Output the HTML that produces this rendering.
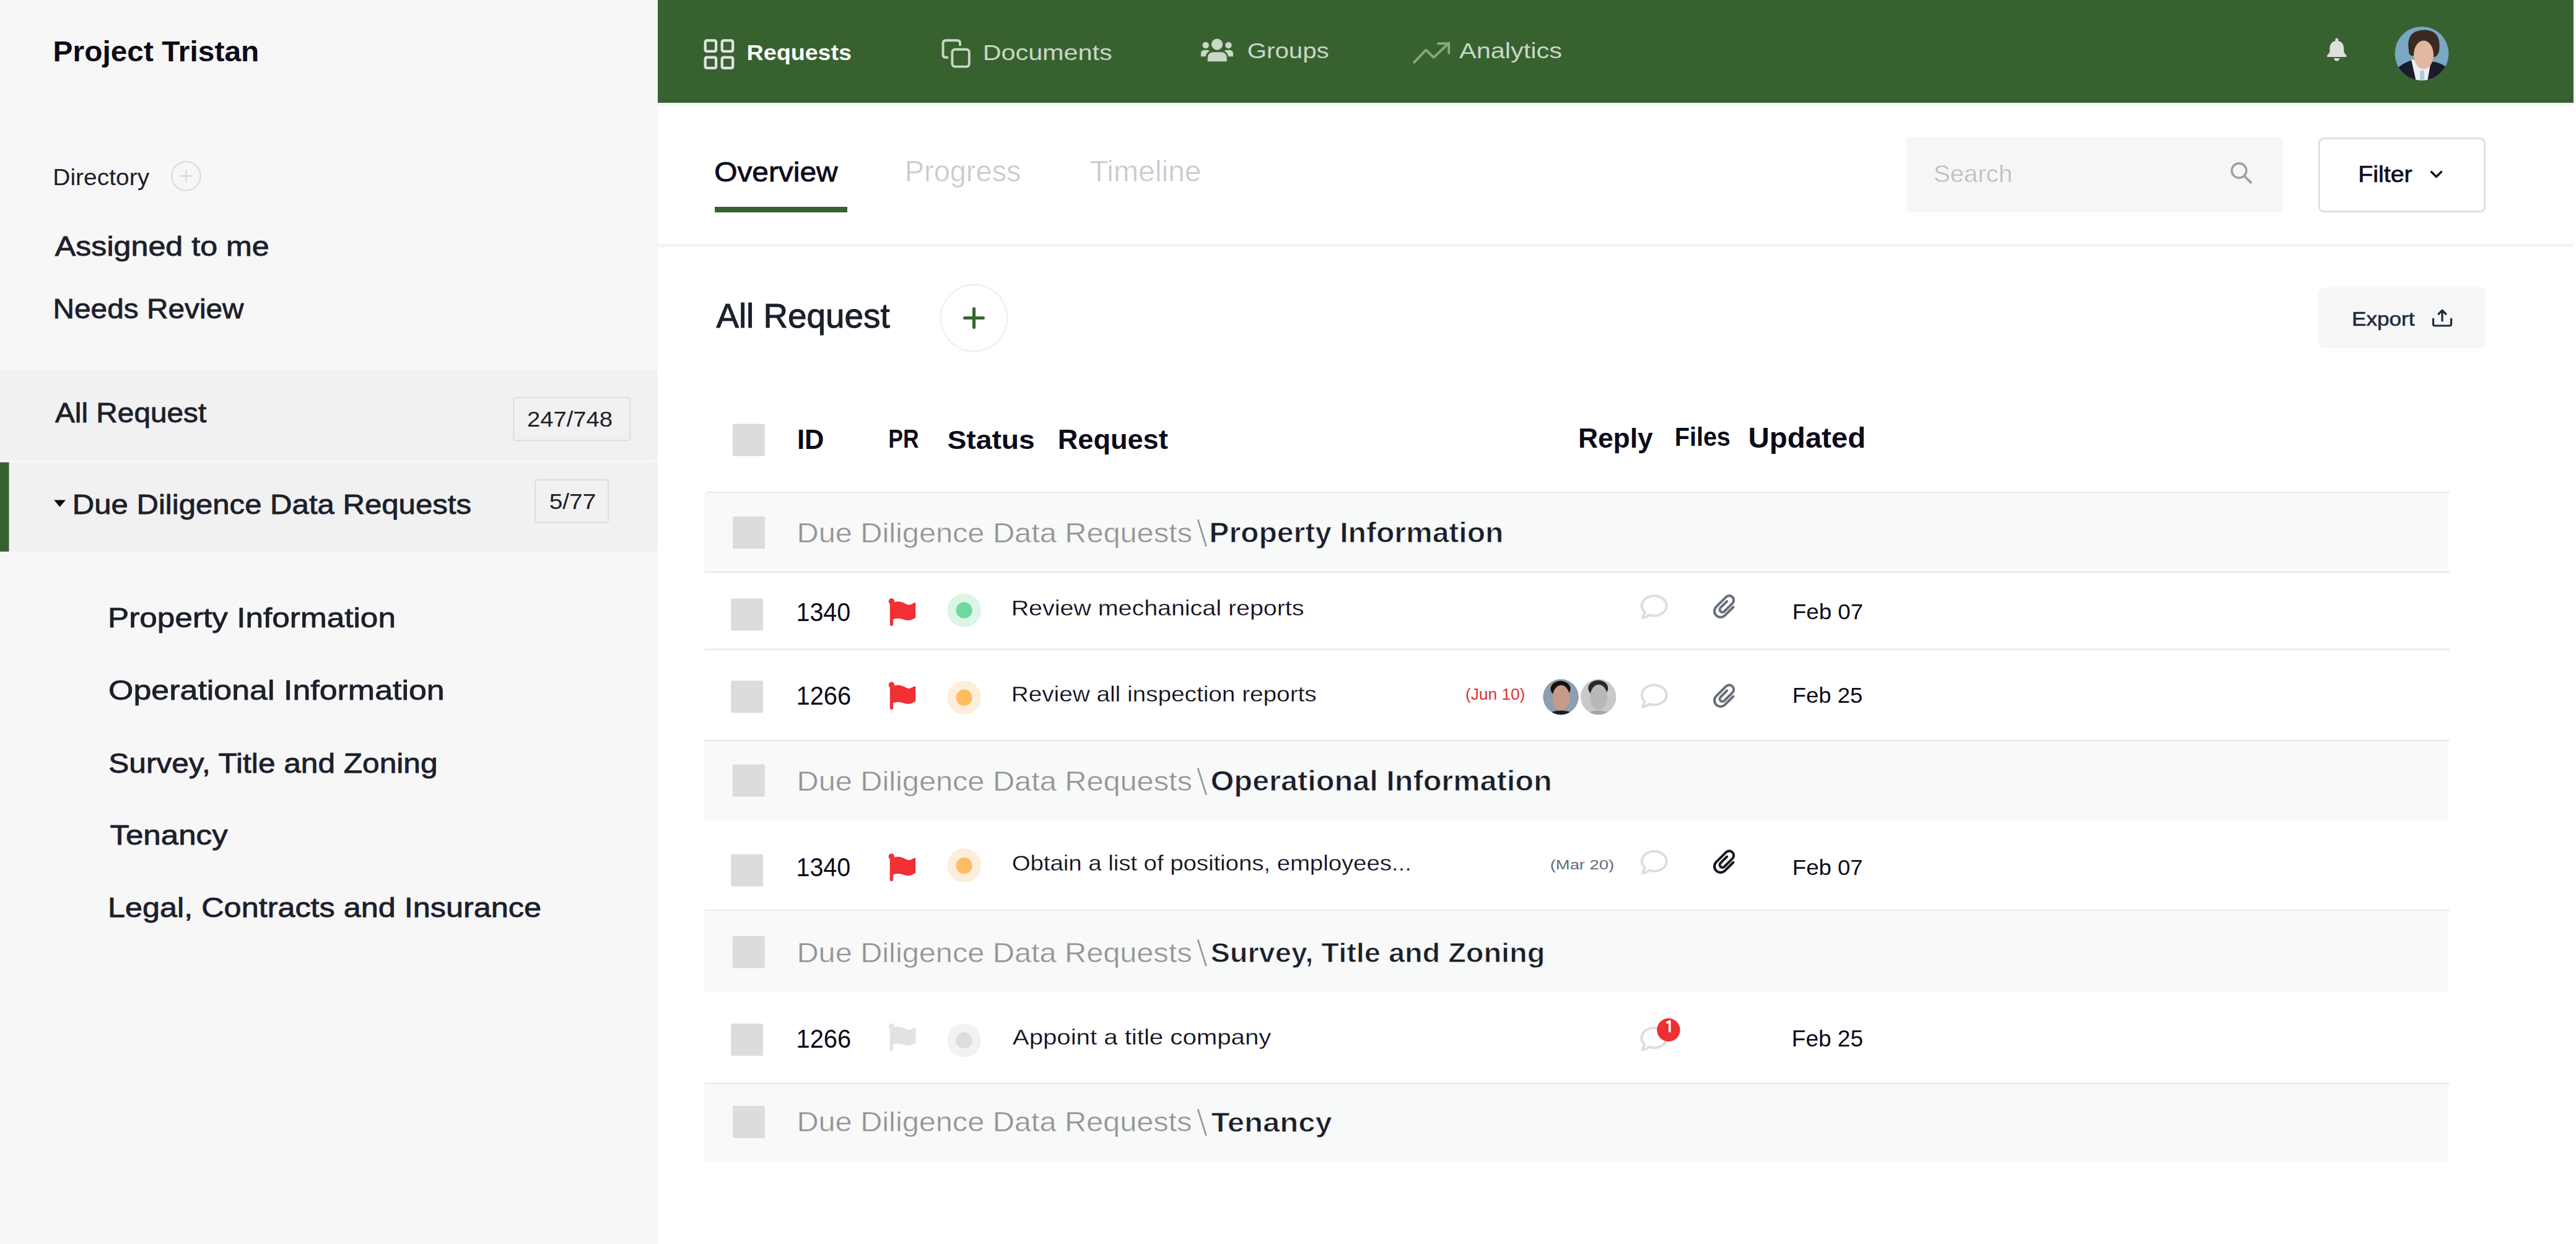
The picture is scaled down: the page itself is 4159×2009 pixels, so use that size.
<!DOCTYPE html>
<html><head><meta charset="utf-8"><title>Project Tristan</title>
<style>html,body{margin:0;padding:0;background:#fff;}body{width:4159px;height:2009px;overflow:hidden;position:relative;}
svg{position:absolute;left:0;top:0;} text{font-family:"Liberation Sans",sans-serif;}</style></head>
<body><svg width="4159" height="2009" viewBox="0 0 4159 2009">
<rect x="0" y="0" width="1062" height="2009" fill="#f7f7f7"/><path d="M0,0 H4 Q0,0 0,4 Z" fill="#fff"/>
<rect x="-10" y="596.6" width="1072" height="147" rx="6" fill="#f1f1f1"/>
<rect x="-10" y="746.6" width="1072" height="144.2" rx="6" fill="#f1f1f1"/>
<rect x="0" y="746.6" width="14.5" height="144.2" fill="#386130"/>
<rect x="1062" y="0" width="3093" height="166" fill="#386130"/>
<defs><linearGradient id="sh" x1="0" y1="0" x2="0" y2="1"><stop offset="0" stop-color="#ffffff"/><stop offset="0.2" stop-color="#f3f3f3"/><stop offset="1" stop-color="#fafafa"/></linearGradient></defs>
<rect x="1062" y="166" width="3093" height="6" fill="url(#sh)"/>
<rect x="1062" y="394" width="3093" height="5" fill="#f4f4f4"/>
<rect x="3078.4" y="221.5" width="606.6" height="121.5" rx="5" fill="#f6f6f6"/>
<rect x="3744.2" y="223.6" width="267.6" height="118.2" rx="8" fill="#fff" stroke="#dcdcdc" stroke-width="2.5"/>
<rect x="3742.7" y="464" width="271" height="98.4" rx="9" fill="#f6f6f7"/>
<rect x="1154" y="334" width="214" height="9" fill="#386130"/>
<circle cx="1572.5" cy="513.5" r="53.8" fill="#fff" stroke="#ececf9" stroke-width="2"/>
<path d="M1557.6,513.5H1587.4M1572.5,498.6V528.4" stroke="#386630" stroke-width="5.2" stroke-linecap="round"/>
<rect x="1141" y="794" width="2813.6" height="2" fill="#e6e6e6"/>
<rect x="1137" y="796" width="2816" height="127.0" fill="#f8f9f9"/>
<rect x="1137" y="1197" width="2816" height="128.0" fill="#f8f9f9"/>
<rect x="1137" y="1473.6" width="2816" height="127.7" fill="#f8f9f9"/>
<rect x="1137" y="1750.6" width="2816" height="125.4" fill="#f8f9f9"/>
<rect x="1138" y="923" width="2816.6" height="2" fill="#e6e6e6"/>
<rect x="1138" y="1047.5" width="2816.6" height="2" fill="#e6e6e6"/>
<rect x="1138" y="1195" width="2816.6" height="2" fill="#e6e6e6"/>
<rect x="1138" y="1469.2" width="2816.6" height="2" fill="#e6e6e6"/>
<rect x="1138" y="1748.5" width="2816.6" height="2" fill="#e6e6e6"/>
<rect x="1182.8" y="684.4" width="52" height="52" rx="2.5" fill="#dcdcdc"/>
<rect x="1183" y="834" width="52" height="52" rx="2.5" fill="#dcdcdc"/>
<rect x="1180" y="966.6" width="52" height="52" rx="2.5" fill="#dcdcdc"/>
<rect x="1180" y="1099.3" width="52" height="52" rx="2.5" fill="#dcdcdc"/>
<rect x="1182.7" y="1234.5" width="52" height="52" rx="2.5" fill="#dcdcdc"/>
<rect x="1180" y="1379.5" width="52" height="52" rx="2.5" fill="#dcdcdc"/>
<rect x="1182.7" y="1511.6" width="52" height="52" rx="2.5" fill="#dcdcdc"/>
<rect x="1180" y="1653" width="52" height="52" rx="2.5" fill="#dcdcdc"/>
<rect x="1183" y="1786" width="52" height="52" rx="2.5" fill="#dcdcdc"/>
<g transform="translate(0.00,0.00)" fill="#f03034"><circle cx="1439.4" cy="971" r="4.7"/><rect x="1436.8" y="971" width="5.2" height="39.8" rx="2.6"/><path d="M1441,973.2 C1451,969.5 1457,972.5 1464,976 C1470,979 1474,972.5 1478.3,973.2 V997.5 C1474,999.5 1470,1003 1463,1001.5 C1456,1000 1450,996.5 1441,1000.8 Z"/></g>
<g transform="translate(0.00,135.00)" fill="#f03034"><circle cx="1439.4" cy="971" r="4.7"/><rect x="1436.8" y="971" width="5.2" height="39.8" rx="2.6"/><path d="M1441,973.2 C1451,969.5 1457,972.5 1464,976 C1470,979 1474,972.5 1478.3,973.2 V997.5 C1474,999.5 1470,1003 1463,1001.5 C1456,1000 1450,996.5 1441,1000.8 Z"/></g>
<g transform="translate(-0.10,412.30)" fill="#f03034"><circle cx="1439.4" cy="971" r="4.7"/><rect x="1436.8" y="971" width="5.2" height="39.8" rx="2.6"/><path d="M1441,973.2 C1451,969.5 1457,972.5 1464,976 C1470,979 1474,972.5 1478.3,973.2 V997.5 C1474,999.5 1470,1003 1463,1001.5 C1456,1000 1450,996.5 1441,1000.8 Z"/></g>
<g transform="translate(0.00,686.50)" fill="#e2e2e2"><circle cx="1439.4" cy="971" r="4.7"/><rect x="1436.8" y="971" width="5.2" height="39.8" rx="2.6"/><path d="M1441,973.2 C1451,969.5 1457,972.5 1464,976 C1470,979 1474,972.5 1478.3,973.2 V997.5 C1474,999.5 1470,1003 1463,1001.5 C1456,1000 1450,996.5 1441,1000.8 Z"/></g>
<circle cx="1556.6" cy="985.5" r="27.3" fill="#dcf5e7"/><circle cx="1556.6" cy="985.5" r="13.1" fill="#6fd99c"/>
<circle cx="1556.6" cy="1126.7" r="27.3" fill="#fdeedb"/><circle cx="1556.6" cy="1126.7" r="13.1" fill="#fdbd60"/>
<circle cx="1556.6" cy="1397.9" r="27.3" fill="#fdeedb"/><circle cx="1556.6" cy="1397.9" r="13.1" fill="#fdbd60"/>
<circle cx="1556.6" cy="1680.2" r="27.3" fill="#f2f2f2"/><circle cx="1556.6" cy="1680.2" r="13.1" fill="#dddddd"/>
<path transform="translate(2671.1,978.7)" d="M-8.6,14.2 A20,16 0 1,0 -15.5,10.1 L-19.5,18.8 Q-14,18.8 -8.6,14.2 Z" fill="none" stroke="#dddddd" stroke-width="4" stroke-linejoin="round"/>
<path transform="translate(2671.1,1122.8)" d="M-8.6,14.2 A20,16 0 1,0 -15.5,10.1 L-19.5,18.8 Q-14,18.8 -8.6,14.2 Z" fill="none" stroke="#dddddd" stroke-width="4" stroke-linejoin="round"/>
<path transform="translate(2671.1,1391.2)" d="M-8.6,14.2 A20,16 0 1,0 -15.5,10.1 L-19.5,18.8 Q-14,18.8 -8.6,14.2 Z" fill="none" stroke="#dddddd" stroke-width="4" stroke-linejoin="round"/>
<path transform="translate(2670.8,1676.5)" d="M-8.6,14.2 A20,16 0 1,0 -15.5,10.1 L-19.5,18.8 Q-14,18.8 -8.6,14.2 Z" fill="none" stroke="#dddddd" stroke-width="4" stroke-linejoin="round"/>
<circle cx="2693.9" cy="1663.3" r="18.7" fill="#ee3034"/><path d="M2690.2,1652 L2695.8,1649.3 V1667" fill="none" stroke="#fff" stroke-width="3.6" stroke-linejoin="round"/>
<path transform="translate(0,0) matrix(0.7071,-0.7071,0.7071,0.7071,2770.9,979.9)" d="M18.5,6 L3.8,6 A4.25,4.25 0 0 0 3.8,14.5 L22.4,14.5 A7.25,7.25 0 0 0 22.4,0 L0,0 A9.9,9.9 0 0 0 0,19.8 L19,19.8" fill="none" stroke="#666e7a" stroke-width="4" stroke-linecap="round" stroke-linejoin="round"/>
<path transform="translate(0,144.3) matrix(0.7071,-0.7071,0.7071,0.7071,2770.9,979.9)" d="M18.5,6 L3.8,6 A4.25,4.25 0 0 0 3.8,14.5 L22.4,14.5 A7.25,7.25 0 0 0 22.4,0 L0,0 A9.9,9.9 0 0 0 0,19.8 L19,19.8" fill="none" stroke="#666e7a" stroke-width="4" stroke-linecap="round" stroke-linejoin="round"/>
<path transform="translate(0,412.3) matrix(0.7071,-0.7071,0.7071,0.7071,2770.9,979.9)" d="M18.5,6 L3.8,6 A4.25,4.25 0 0 0 3.8,14.5 L22.4,14.5 A7.25,7.25 0 0 0 22.4,0 L0,0 A9.9,9.9 0 0 0 0,19.8 L19,19.8" fill="none" stroke="#15141f" stroke-width="4" stroke-linecap="round" stroke-linejoin="round"/>
<clipPath id="c2520"><circle cx="2520" cy="1125.5" r="28.7"/></clipPath><g clip-path="url(#c2520)"><rect x="2490" y="1095.5" width="60" height="60" fill="#8b9fb0"/><ellipse cx="2519.5" cy="1112.5" rx="16" ry="13" fill="#17120f"/><ellipse cx="2520.5" cy="1127.0" rx="14" ry="20.5" fill="#c89a88"/><ellipse cx="2520" cy="1160.5" rx="26" ry="13" fill="#1e1c22"/></g>
<clipPath id="c2580"><circle cx="2580.7" cy="1125.5" r="28.7"/></clipPath><g clip-path="url(#c2580)"><rect x="2550.7" y="1095.5" width="60" height="60" fill="#c9c9cb"/><ellipse cx="2580.2" cy="1111.5" rx="16" ry="13" fill="#2c2627"/><ellipse cx="2581.2" cy="1126.0" rx="14" ry="20.5" fill="#b8b8ba"/><ellipse cx="2580.7" cy="1160.5" rx="26" ry="13" fill="#a5a5a8"/></g>
<rect x="1138.65" y="65.45" width="17.4" height="17.4" rx="2.5" fill="none" stroke="#e2e2e2" stroke-width="4.3"/>
<rect x="1165.75" y="65.45" width="17.4" height="17.4" rx="2.5" fill="none" stroke="#e2e2e2" stroke-width="4.3"/>
<rect x="1138.65" y="92.55" width="17.4" height="17.4" rx="2.5" fill="none" stroke="#e2e2e2" stroke-width="4.3"/>
<rect x="1165.75" y="92.55" width="17.4" height="17.4" rx="2.5" fill="none" stroke="#e2e2e2" stroke-width="4.3"/>
<path d="M1529.5,92.7 H1527 Q1522.5,92.7 1522.5,88.2 V69.8 Q1522.5,65.3 1527,65.3 H1545.5 Q1550,65.3 1550,69.8 V72.6" fill="none" stroke="#c9d7c6" stroke-width="3.9" stroke-linecap="round"/>
<rect x="1537.4" y="79.7" width="27.4" height="27.9" rx="4.5" fill="none" stroke="#c9d7c6" stroke-width="3.9"/>
<g fill="#c9d7c6"><circle cx="1965" cy="71.6" r="9.1"/><circle cx="1946.6" cy="73" r="5.3"/><circle cx="1983.4" cy="73" r="5.3"/><path d="M1949.7,99.3 V94 Q1949.7,84.3 1959.5,84.3 H1971 Q1980.7,84.3 1980.7,94 V99.3 Z"/><path d="M1938.8,91.2 V87 Q1938.8,80.7 1945,80.7 H1949 Q1951.5,80.7 1953,82.2 Q1947.5,85.5 1946.5,91.2 Z"/><path d="M1991,91.2 V87 Q1991,80.7 1984.8,80.7 H1980.8 Q1978.3,80.7 1976.8,82.2 Q1982.3,85.5 1983.3,91.2 Z"/></g>
<path d="M2283.3,100.6 L2302.2,80.7 L2314.7,92.8 L2339.2,69.5 M2322,70.3 H2339.2 V85.8" fill="none" stroke="#87a783" stroke-width="3.9" stroke-linecap="round" stroke-linejoin="round"/>
<path fill="#dedede" d="M3772.8,61.5 C3774.2,61.5 3775.2,62.6 3775.2,64 V66 C3781.5,67.3 3784.2,72.5 3784.2,78.5 V82.5 C3784.2,85 3786,87 3788.2,89.2 C3789.2,90.3 3788.7,92 3787.2,92 H3758.4 C3756.9,92 3756.4,90.3 3757.4,89.2 C3759.6,87 3761.4,85 3761.4,82.5 V78.5 C3761.4,72.5 3764.1,67.3 3770.4,66 V64 C3770.4,62.6 3771.4,61.5 3772.8,61.5 Z M3768.2,94 H3777.4 C3777.4,96.8 3775.3,98.6 3772.8,98.6 C3770.3,98.6 3768.2,96.8 3768.2,94 Z"/>
<clipPath id="av"><circle cx="3910" cy="86.5" r="43.5"/></clipPath><g clip-path="url(#av)"><rect x="3860" y="40" width="100" height="100" fill="#78a8c4"/><path d="M3862,118 Q3878,101 3895,97 L3911,131 L3925,99 Q3945,101 3958,116 V135 H3862 Z" fill="#1b1c2a"/><path d="M3893,96 L3925,98 L3919,132 L3901,132 Z" fill="#eceef0"/><rect x="3907" y="114" width="7" height="18" fill="#a9cde0"/><path d="M3889,82 Q3885,58 3900,51 Q3916,45 3929,52 Q3941,60 3938,82 Q3936,90 3931,92 L3893,90 Q3889,88 3889,82 Z" fill="#3b2a20"/><ellipse cx="3913" cy="88.5" rx="16" ry="23" fill="#e1b79f"/></g>
<circle cx="3615" cy="275.5" r="11.8" fill="none" stroke="#98a1a9" stroke-width="3.5"/><path d="M3623.8,284.5 L3634,294.8" stroke="#98a1a9" stroke-width="3.8" stroke-linecap="round"/>
<path d="M3925.5,277.5 L3933.5,285.5 L3941.5,277.5" fill="none" stroke="#0c0b19" stroke-width="3.2" stroke-linecap="round" stroke-linejoin="round"/>
<path d="M3943,518 V501.5 M3937.2,507 L3943,501.2 L3948.8,507 M3928.5,515 V523.5 Q3928.5,526 3931,526 H3955 Q3957.5,526 3957.5,523.5 V515" fill="none" stroke="#1e2b3b" stroke-width="3.2" stroke-linecap="round" stroke-linejoin="round"/>
<circle cx="300.4" cy="284.2" r="23.3" fill="none" stroke="#d9d9d9" stroke-width="2"/><path d="M290.2,284.2 H310.7 M300.4,274.6 V294.4" stroke="#d5d5d5" stroke-width="2"/>
<path d="M87.2,807.6 H106 L96.6,818.8 Z" fill="#0c0b19"/>
<rect x="829.4" y="641.8" width="187.9" height="69.4" rx="4" fill="none" stroke="#dcdcdc" stroke-width="2"/>
<rect x="864.3" y="774.7" width="117.9" height="69" rx="4" fill="none" stroke="#dcdcdc" stroke-width="2"/>
<path d="M1934,839.0 L1947.5,882.4" stroke="#939393" stroke-width="2.6"/>
<path d="M1934,1240.3 L1947.5,1283.7" stroke="#939393" stroke-width="2.6"/>
<path d="M1934,1517.4 L1947.5,1560.4" stroke="#939393" stroke-width="2.6"/>
<path d="M1934,1791.3 L1947.5,1834.1" stroke="#939393" stroke-width="2.6"/>
<text x="85.59" y="98.80" font-size="46.22" fill="#0c0b19" textLength="332.72" lengthAdjust="spacingAndGlyphs" font-weight="bold">Project Tristan</text>
<text x="85.31" y="299.20" font-size="37.79" fill="#1c202b" textLength="155.88" lengthAdjust="spacingAndGlyphs">Directory</text>
<text x="88.80" y="413.30" font-size="43.60" fill="#1c202b" textLength="345.92" lengthAdjust="spacingAndGlyphs" stroke="#1c202b" stroke-width="0.81">Assigned to me</text>
<text x="85.51" y="514.10" font-size="43.60" fill="#1c202b" textLength="308.10" lengthAdjust="spacingAndGlyphs" stroke="#1c202b" stroke-width="0.81">Needs Review</text>
<text x="88.91" y="682.19" font-size="43.88" fill="#1c202b" textLength="244.39" lengthAdjust="spacingAndGlyphs" stroke="#1c202b" stroke-width="0.81">All Request</text>
<text x="850.90" y="689.00" font-size="34.88" fill="#1c202b" textLength="138.13" lengthAdjust="spacingAndGlyphs">247/748</text>
<text x="116.71" y="830.09" font-size="44.59" fill="#1c202b" textLength="644.30" lengthAdjust="spacingAndGlyphs" stroke="#1c202b" stroke-width="0.82">Due Diligence Data Requests</text>
<text x="886.69" y="822.00" font-size="34.88" fill="#1c202b" textLength="75.57" lengthAdjust="spacingAndGlyphs">5/77</text>
<text x="174.01" y="1012.98" font-size="45.15" fill="#1c202b" textLength="464.97" lengthAdjust="spacingAndGlyphs" stroke="#1c202b" stroke-width="0.83">Property Information</text>
<text x="175.07" y="1129.59" font-size="44.45" fill="#1c202b" textLength="542.69" lengthAdjust="spacingAndGlyphs" stroke="#1c202b" stroke-width="0.82">Operational Information</text>
<text x="175.22" y="1247.98" font-size="45.15" fill="#1c202b" textLength="531.27" lengthAdjust="spacingAndGlyphs" stroke="#1c202b" stroke-width="0.83">Survey, Title and Zoning</text>
<text x="177.40" y="1364.10" font-size="43.74" fill="#1c202b" textLength="190.33" lengthAdjust="spacingAndGlyphs" stroke="#1c202b" stroke-width="0.81">Tenancy</text>
<text x="174.00" y="1480.59" font-size="44.30" fill="#1c202b" textLength="700.05" lengthAdjust="spacingAndGlyphs" stroke="#1c202b" stroke-width="0.82">Legal, Contracts and Insurance</text>
<text x="1205.50" y="96.70" font-size="35.90" fill="#ffffff" textLength="169.51" lengthAdjust="spacingAndGlyphs" font-weight="bold">Requests</text>
<text x="1586.65" y="96.70" font-size="35.17" fill="#c9d7c6" textLength="209.03" lengthAdjust="spacingAndGlyphs">Documents</text>
<text x="2013.86" y="93.60" font-size="35.17" fill="#c9d7c6" textLength="131.80" lengthAdjust="spacingAndGlyphs">Groups</text>
<text x="2356.00" y="93.60" font-size="35.76" fill="#c9d7c6" textLength="166.02" lengthAdjust="spacingAndGlyphs">Analytics</text>
<text x="1153.21" y="292.58" font-size="45.29" fill="#0c0b19" textLength="199.36" lengthAdjust="spacingAndGlyphs" stroke="#0c0b19" stroke-width="0.84">Overview</text>
<text x="1460.77" y="293.25" font-size="47.24" fill="#c9c9d0" textLength="187.58" lengthAdjust="spacingAndGlyphs" stroke="#ffffff" stroke-width="0.5">Progress</text>
<text x="1759.73" y="293.25" font-size="47.24" fill="#c9c9d0" textLength="179.80" lengthAdjust="spacingAndGlyphs" stroke="#ffffff" stroke-width="0.5">Timeline</text>
<text x="3121.67" y="294.20" font-size="38.95" fill="#b4bbc2" textLength="127.34" lengthAdjust="spacingAndGlyphs" stroke="#f6f6f6" stroke-width="0.6">Search</text>
<text x="3807.15" y="293.56" font-size="37.09" fill="#0c0b19" textLength="87.57" lengthAdjust="spacingAndGlyphs" stroke="#0c0b19" stroke-width="0.69">Filter</text>
<text x="1156.40" y="529.00" font-size="54.64" fill="#1c202b" textLength="280.27" lengthAdjust="spacingAndGlyphs" stroke="#1c202b" stroke-width="1.01">All Request</text>
<text x="3797.10" y="526.20" font-size="31.99" fill="#1e2b3b" textLength="101.48" lengthAdjust="spacingAndGlyphs" stroke="#1e2b3b" stroke-width="0.59">Export</text>
<text x="1287.02" y="725.40" font-size="43.75" fill="#0c0b19" textLength="43.36" lengthAdjust="spacingAndGlyphs" font-weight="bold">ID</text>
<text x="1434.33" y="723.00" font-size="42.44" fill="#0c0b19" textLength="49.21" lengthAdjust="spacingAndGlyphs" font-weight="bold">PR</text>
<text x="1529.52" y="725.40" font-size="42.73" fill="#0c0b19" textLength="141.18" lengthAdjust="spacingAndGlyphs" font-weight="bold">Status</text>
<text x="1707.76" y="725.40" font-size="44.19" fill="#0c0b19" textLength="177.95" lengthAdjust="spacingAndGlyphs" font-weight="bold">Request</text>
<text x="2548.00" y="722.70" font-size="44.33" fill="#0c0b19" textLength="120.55" lengthAdjust="spacingAndGlyphs" font-weight="bold">Reply</text>
<text x="2703.84" y="719.70" font-size="42.59" fill="#0c0b19" textLength="90.01" lengthAdjust="spacingAndGlyphs" font-weight="bold">Files</text>
<text x="2822.44" y="722.70" font-size="46.08" fill="#0c0b19" textLength="189.76" lengthAdjust="spacingAndGlyphs" font-weight="bold">Updated</text>
<text x="1286.50" y="875.65" font-size="44.91" fill="#939393" textLength="638.33" lengthAdjust="spacingAndGlyphs" stroke="#f8f9f9" stroke-width="0.5">Due Diligence Data Requests</text>
<text x="1952.38" y="875.85" font-size="45.49" fill="#1b1f2a" textLength="475.01" lengthAdjust="spacingAndGlyphs" font-weight="bold" stroke="#f8f9f9" stroke-width="0.9">Property Information</text>
<text x="1286.50" y="1276.95" font-size="44.91" fill="#939393" textLength="638.33" lengthAdjust="spacingAndGlyphs" stroke="#f8f9f9" stroke-width="0.5">Due Diligence Data Requests</text>
<text x="1954.48" y="1277.15" font-size="45.49" fill="#1b1f2a" textLength="551.25" lengthAdjust="spacingAndGlyphs" font-weight="bold" stroke="#f8f9f9" stroke-width="0.9">Operational Information</text>
<text x="1286.46" y="1553.65" font-size="44.33" fill="#939393" textLength="638.07" lengthAdjust="spacingAndGlyphs" stroke="#f8f9f9" stroke-width="0.5">Due Diligence Data Requests</text>
<text x="1954.51" y="1553.85" font-size="44.91" fill="#1b1f2a" textLength="539.88" lengthAdjust="spacingAndGlyphs" font-weight="bold" stroke="#f8f9f9" stroke-width="0.9">Survey, Title and Zoning</text>
<text x="1286.44" y="1827.35" font-size="44.04" fill="#939393" textLength="637.94" lengthAdjust="spacingAndGlyphs" stroke="#f8f9f9" stroke-width="0.5">Due Diligence Data Requests</text>
<text x="1955.55" y="1827.55" font-size="44.62" fill="#1b1f2a" textLength="195.29" lengthAdjust="spacingAndGlyphs" font-weight="bold" stroke="#f8f9f9" stroke-width="0.9">Tenancy</text>
<text x="1285.53" y="1002.50" font-size="42.59" fill="#0c0b19" textLength="87.60" lengthAdjust="spacingAndGlyphs">1340</text>
<text x="1632.65" y="994.05" font-size="35.76" fill="#0c0b19" textLength="472.87" lengthAdjust="spacingAndGlyphs" stroke="#ffffff" stroke-width="0.3">Review mechanical reports</text>
<text x="2893.80" y="999.80" font-size="34.88" fill="#0c0b19" textLength="114.27" lengthAdjust="spacingAndGlyphs">Feb 07</text>
<text x="1285.49" y="1138.20" font-size="42.59" fill="#0c0b19" textLength="88.58" lengthAdjust="spacingAndGlyphs">1266</text>
<text x="1632.68" y="1132.65" font-size="35.76" fill="#0c0b19" textLength="493.02" lengthAdjust="spacingAndGlyphs" stroke="#ffffff" stroke-width="0.3">Review all inspection reports</text>
<text x="2893.83" y="1135.20" font-size="35.17" fill="#0c0b19" textLength="113.34" lengthAdjust="spacingAndGlyphs">Feb 25</text>
<text x="1285.53" y="1414.80" font-size="42.59" fill="#0c0b19" textLength="87.60" lengthAdjust="spacingAndGlyphs">1340</text>
<text x="1633.76" y="1406.45" font-size="35.32" fill="#0c0b19" textLength="645.03" lengthAdjust="spacingAndGlyphs" stroke="#ffffff" stroke-width="0.3">Obtain a list of positions, employees...</text>
<text x="2893.86" y="1412.50" font-size="35.76" fill="#0c0b19" textLength="113.64" lengthAdjust="spacingAndGlyphs">Feb 07</text>
<text x="1285.49" y="1692.00" font-size="42.59" fill="#0c0b19" textLength="88.58" lengthAdjust="spacingAndGlyphs">1266</text>
<text x="1634.85" y="1687.15" font-size="35.76" fill="#0c0b19" textLength="417.46" lengthAdjust="spacingAndGlyphs" stroke="#ffffff" stroke-width="0.3">Appoint a title company</text>
<text x="2892.87" y="1689.70" font-size="36.63" fill="#0c0b19" textLength="115.10" lengthAdjust="spacingAndGlyphs">Feb 25</text>
<text x="2365.95" y="1129.70" font-size="25.00" fill="#e22f2f" textLength="96.45" lengthAdjust="spacingAndGlyphs">(Jun 10)</text>
<text x="2502.77" y="1404.30" font-size="22.24" fill="#5f6b7a" textLength="103.32" lengthAdjust="spacingAndGlyphs">(Mar 20)</text>
</svg></body></html>
